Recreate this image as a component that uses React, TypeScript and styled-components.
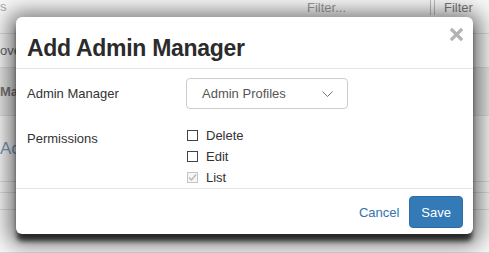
import React from "react";
import styled, { createGlobalStyle } from "styled-components";

const Global = createGlobalStyle`
  html, body { margin: 0; padding: 0; }
  body {
    width: 489px;
    height: 253px;
    overflow: hidden;
    background: #f7f7f7;
    font-family: "Liberation Sans", Arial, sans-serif;
    position: relative;
  }
`;

const Page = styled.div`
  width: 489px;
  height: 253px;
  display: flex;
  flex-direction: column;
  color: #555;
  font-size: 13px;
`;

const BgRow = styled.div<{ $h: number; $bg?: string; $top?: boolean }>`
  height: ${(p) => p.$h}px;
  display: flex;
  align-items: ${(p) => (p.$top ? "flex-start" : "center")};
  border-bottom: 1px solid #ddd;
  background: ${(p) => p.$bg || "transparent"};
  box-sizing: border-box;
`;

const EdgeCell = styled.div<{ $color?: string; $size?: number; $bold?: boolean }>`
  white-space: nowrap;
  color: ${(p) => p.$color || "#666"};
  font-size: ${(p) => p.$size || 13}px;
  font-weight: ${(p) => (p.$bold ? 700 : 400)};
  line-height: 1;
`;

const Spacer = styled.div`
  flex: 1;
`;

const FilterBox = styled.div<{ $w: number }>`
  width: ${(p) => p.$w}px;
  height: 15px;
  display: flex;
  align-items: center;
  padding-left: 10px;
  box-sizing: border-box;
  color: #999;
  font-size: 13px;
  border-right: 1px solid #bbb;
  margin-right: 3px;
  &:last-child { border-right: none; border-left: 1px solid #bbb; color: #777; padding-left: 9px; }
`;

const Modal = styled.div`
  position: absolute;
  left: 16px;
  top: 17px;
  width: 457px;
  background: #fff;
  border-radius: 6px;
  box-shadow: 0 8px 5px -1px rgba(0, 0, 0, 0.72), 0 3px 20px 8px rgba(0, 0, 0, 0.5);
  display: flex;
  flex-direction: column;
  color: #333;
`;

const Header = styled.div`
  display: flex;
  justify-content: space-between;
  align-items: flex-start;
  padding: 18px 10px 7px 11px;
  border-bottom: 1px solid #e5e5e5;
`;

const Title = styled.h4`
  margin: 0;
  font-size: 23px;
  letter-spacing: -0.3px;
  line-height: 26px;
  font-weight: 700;
  color: #2b2b2b;
`;

const Close = styled.button`
  margin-top: -7px;
  padding: 0;
  border: 0;
  background: none;
  width: 13px;
  height: 13px;
  display: flex;
`;

const Body = styled.div`
  display: grid;
  grid-template-columns: 159px 1fr;
  row-gap: 16px;
  padding: 9px 10px 0 11px;
`;

const Label = styled.div<{ $top?: number }>`
  font-size: 13px;
  line-height: 21px;
  align-self: ${(p) => (p.$top !== undefined ? "start" : "center")};
  padding-top: ${(p) => p.$top || 0}px;
`;

const Select = styled.div`
  width: 162px;
  height: 31px;
  box-sizing: border-box;
  border: 1px solid #ccc;
  border-radius: 4px;
  display: flex;
  align-items: center;
  justify-content: space-between;
  padding: 0 14px 0 15px;
  font-size: 13px;
  color: #555;
`;

const Checks = styled.div`
  display: flex;
  flex-direction: column;
`;

const CheckRow = styled.label`
  display: flex;
  align-items: center;
  gap: 8px;
  height: 21px;
  font-size: 13px;
  color: #333;
`;

const Box = styled.span<{ $disabled?: boolean }>`
  width: 11px;
  height: 11px;
  box-sizing: border-box;
  border: 1px solid ${(p) => (p.$disabled ? "#c4c4c4" : "#444")};
  background: ${(p) => (p.$disabled ? "#f6f6f6" : "#fff")};
  display: flex;
  align-items: center;
  justify-content: center;
  margin-left: 1px;
`;

const Footer = styled.div`
  display: flex;
  justify-content: flex-end;
  align-items: center;
  gap: 10px;
  padding: 7px 10px 6px;
  border-top: 1px solid #e5e5e5;
`;

const LinkButton = styled.button`
  border: 0;
  background: none;
  padding: 0;
  font-family: inherit;
  font-size: 13px;
  color: #2f73b0;
`;

const PrimaryButton = styled.button`
  height: 32px;
  padding: 0 11px;
  border: 1px solid #2e6da4;
  border-radius: 4px;
  background: #337ab7;
  color: #fff;
  font-family: inherit;
  font-size: 13px;
`;

const perms = [
  { name: "Delete", checked: false },
  { name: "Edit", checked: false },
  { name: "List", checked: true },
];

export default function App() {
  return (
    <>
      <Global />
      <Page>
        <BgRow $h={34} $top>
          <EdgeCell $color="#aaa">s</EdgeCell>
          <Spacer />
          <FilterBox $w={134}>Filter...</FilterBox>
          <FilterBox $w={52}>Filter</FilterBox>
        </BgRow>
        <BgRow $h={34}>
          <EdgeCell>ove</EdgeCell>
        </BgRow>
        <BgRow $h={48} $bg="#e8e8e8">
          <EdgeCell $bold $color="#777">Ma</EdgeCell>
        </BgRow>
        <BgRow $h={66}>
          <EdgeCell $color="#7a9cc0" $size={17}>Ac</EdgeCell>
        </BgRow>
        <BgRow $h={11} />
        <BgRow $h={17} />
        <BgRow $h={43} />
      </Page>
      <Modal>
        <Header>
          <Title>Add Admin Manager</Title>
          <Close aria-label="Close">
            <svg width="13" height="13" viewBox="0 0 13 13">
              <path d="M2 2 L11 11 M11 2 L2 11" stroke="#b3b3b3" strokeWidth="3.2" strokeLinecap="square" />
            </svg>
          </Close>
        </Header>
        <Body>
          <Label>Admin Manager</Label>
          <Select>
            <span>Admin Profiles</span>
            <svg width="11" height="6" viewBox="0 0 11 6">
              <polyline points="0.5,0.5 5.5,5.5 10.5,0.5" fill="none" stroke="#777" strokeWidth="1" />
            </svg>
          </Select>
          <Label $top={3}>Permissions</Label>
          <Checks>
            {perms.map((p) => (
              <CheckRow key={p.name}>
                <Box $disabled={p.checked}>
                  {p.checked && (
                    <svg width="9" height="9" viewBox="0 0 9 9">
                      <polyline points="1,4.5 3.5,7 8,1.5" fill="none" stroke="#b5b5b5" strokeWidth="1.2" />
                    </svg>
                  )}
                </Box>
                {p.name}
              </CheckRow>
            ))}
          </Checks>
        </Body>
        <Footer>
          <LinkButton>Cancel</LinkButton>
          <PrimaryButton>Save</PrimaryButton>
        </Footer>
      </Modal>
    </>
  );
}
